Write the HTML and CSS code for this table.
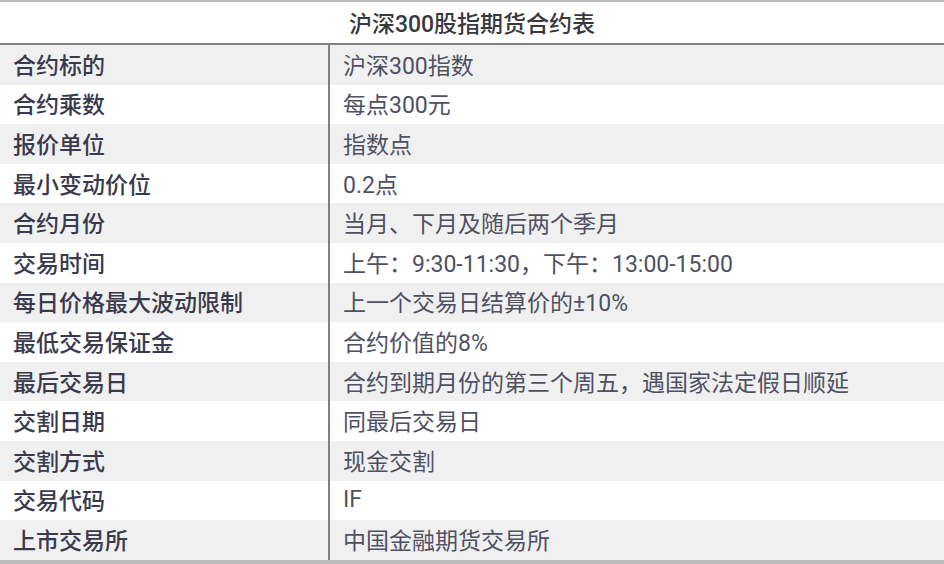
FILE: index.html
```html
<!DOCTYPE html>
<html lang="zh-CN">
<head>
<meta charset="utf-8">
<title>沪深300股指期货合约表</title>
<link rel="stylesheet" href="styles.css">
</head>
<body>
<div class="sheet">
  <div class="title">沪深300股指期货合约表</div>
  <div class="rows">
    <div class="row alt"><div class="label">合约标的</div><div class="value">沪深300指数</div></div>
    <div class="row"><div class="label">合约乘数</div><div class="value">每点300元</div></div>
    <div class="row alt"><div class="label">报价单位</div><div class="value">指数点</div></div>
    <div class="row"><div class="label">最小变动价位</div><div class="value">0.2点</div></div>
    <div class="row alt"><div class="label">合约月份</div><div class="value">当月、下月及随后两个季月</div></div>
    <div class="row"><div class="label">交易时间</div><div class="value">上午：9:30-11:30，下午：13:00-15:00</div></div>
    <div class="row alt"><div class="label">每日价格最大波动限制</div><div class="value">上一个交易日结算价的±10%</div></div>
    <div class="row"><div class="label">最低交易保证金</div><div class="value">合约价值的8%</div></div>
    <div class="row alt"><div class="label">最后交易日</div><div class="value">合约到期月份的第三个周五，遇国家法定假日顺延</div></div>
    <div class="row"><div class="label">交割日期</div><div class="value">同最后交易日</div></div>
    <div class="row alt"><div class="label">交割方式</div><div class="value">现金交割</div></div>
    <div class="row"><div class="label">交易代码</div><div class="value">IF</div></div>
    <div class="row alt"><div class="label">上市交易所</div><div class="value">中国金融期货交易所</div></div>
  </div>
</div>
</body>
</html>
```

FILE: styles.css
```css
html, body {
  margin: 0;
  padding: 0;
  background: #ffffff;
}

body {
  font-family: "Roboto", "Noto Sans CJK SC", sans-serif;
  font-size: 23px;
}

.sheet {
  width: 944px;
  border-top: 2px solid #bbbbbb;
  border-bottom: 4px solid #bbbbbb;
}

.title {
  height: 41px;
  box-sizing: border-box;
  padding-bottom: 2px;
  display: flex;
  align-items: center;
  justify-content: center;
  font-weight: 500;
  color: #38383e;
  border-bottom: 2px solid #808080;
}

.title {
  height: 43px;
}

.rows {
  display: flex;
  flex-direction: column;
}

.row {
  height: 39.6px;
  display: flex;
  background: #ffffff;
}

.row.alt {
  background: #f0f0f0;
}

.label {
  width: 330px;
  flex: none;
  box-sizing: border-box;
  padding-left: 13px;
  padding-bottom: 2px;
  display: flex;
  align-items: center;
  border-right: 2px solid #808080;
  font-weight: 500;
  color: #3a3a4e;
}

.value {
  flex: 1;
  padding-left: 13px;
  padding-bottom: 2px;
  display: flex;
  align-items: center;
  color: #505064;
  white-space: nowrap;
}
```
